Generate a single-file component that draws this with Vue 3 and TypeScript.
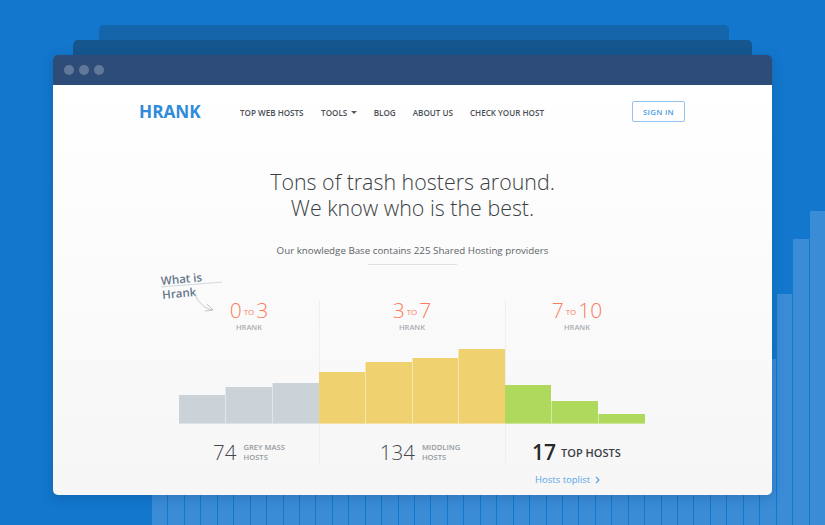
<script setup lang="ts">
const bgBars: number[] = [
  ...Array(37).fill(0).map((_, i) => 150 + i),
  166, 231, 286, 314,
]

interface Col {
  cls: string
  from: string
  to: string
  bars: number[]
}
const cols: Col[] = [
  { cls: 'grey', from: '0', to: '3', bars: [29, 37, 41] },
  { cls: 'yellow', from: '3', to: '7', bars: [52, 62, 66, 75] },
  { cls: 'green', from: '7', to: '10', bars: [39, 23, 10] },
]
</script>

<template>
  <div class="page">
    <div class="bg-bars">
      <i v-for="(h, i) in bgBars" :key="i" class="bg-bar" :style="{ height: h + 'px' }"></i>
    </div>
    <div class="stack">
      <div class="tab tab-back"></div>
      <div class="tab tab-mid"></div>
      <div class="window">
        <div class="titlebar">
          <span class="dot"></span><span class="dot"></span><span class="dot"></span>
        </div>
        <div class="content">
          <header class="nav">
            <div class="logo">HRANK</div>
            <nav class="links">
              <a>TOP WEB HOSTS</a>
              <a class="tools">TOOLS <span class="caret"></span></a>
              <a>BLOG</a>
              <a>ABOUT US</a>
              <a>CHECK YOUR HOST</a>
            </nav>
            <button class="signin">SIGN IN</button>
          </header>

          <h1 class="title">Tons of trash hosters around.<br />We know who is the best.</h1>
          <p class="sub">Our knowledge Base contains 225 Shared Hosting providers</p>
          <div class="rule"></div>

          <div class="chart-wrap">
            <div class="note">
              <div class="note-text">What is<br />Hrank</div>
              <svg class="note-svg" width="70" height="45" viewBox="0 0 70 45" fill="none">
                <path d="M1 17 L62 12" stroke="#c9ced3" stroke-width="0.8" />
                <path d="M35 25 C39 33 45 39 53 40" stroke="#b4bac0" stroke-width="0.8" />
                <path d="M47 34 L53 40 L45 41" stroke="#b4bac0" stroke-width="0.8" />
              </svg>
            </div>

            <div class="chart">
              <section v-for="(c, ci) in cols" :key="c.cls" class="col" :class="c.cls">
                <div class="head">
                  <div class="range">
                    {{ c.from }}<span class="to">TO</span>{{ c.to }}
                  </div>
                  <div class="hrank">HRANK</div>
                </div>
                <div class="bars">
                  <div
                    v-for="(b, bi) in c.bars"
                    :key="bi"
                    class="bar"
                    :style="{ height: b + 'px' }"
                  ></div>
                </div>
                <div v-if="ci === 0" class="foot">
                  <span class="num">74</span>
                  <span class="lab">GREY MASS<br />HOSTS</span>
                </div>
                <div v-else-if="ci === 1" class="foot">
                  <span class="num">134</span>
                  <span class="lab">MIDDLING<br />HOSTS</span>
                </div>
                <div v-else class="foot foot-top">
                  <div class="top-row">
                    <span class="num strong">17</span>
                    <span class="top-lab">TOP HOSTS</span>
                  </div>
                  <a class="toplist">Hosts toplist
                    <svg width="5" height="8" viewBox="0 0 5 8" fill="none">
                      <path d="M1 .8 4 4 1 7.2" stroke="#4f9de0" stroke-width="1.1" />
                    </svg>
                  </a>
                </div>
              </section>
            </div>
          </div>
        </div>
      </div>
    </div>
  </div>
</template>

<style>
html, body { margin: 0; padding: 0; }
</style>

<style scoped>
.page {
  position: relative;
  width: 825px;
  height: 525px;
  overflow: hidden;
  background: #1277cd;
  font-family: "Open Sans", "Liberation Sans", sans-serif;
}
.bg-bars {
  position: absolute;
  left: 152px;
  right: 0;
  bottom: 0;
  display: flex;
  align-items: flex-end;
  gap: 1px;
}
.bg-bar {
  flex: 1;
  background: #3a8cd7;
}
.stack {
  position: relative;
  padding-top: 25px;
}
.tab {
  height: 30px;
  border-radius: 5px 5px 0 0;
}
.tab-back {
  margin: 0 96px 0 99px;
  background: #1565ab;
}
.tab-mid {
  margin: -15px 73px 0 73px;
  background: #15568f;
}
.window {
  margin: -15px 53px 0 53px;
  height: 440px;
  border-radius: 5px;
  overflow: hidden;
  box-shadow: 0 3px 12px rgba(10, 50, 100, 0.25);
  display: flex;
  flex-direction: column;
}
.titlebar {
  height: 30px;
  background: #2e4c78;
  display: flex;
  align-items: center;
  gap: 5px;
  padding-left: 11px;
}
.dot {
  width: 10px;
  height: 10px;
  border-radius: 50%;
  background: #62789b;
}
.content {
  flex: 1;
  background: linear-gradient(#ffffff, #f6f6f6);
  display: flex;
  flex-direction: column;
  align-items: center;
}
.nav {
  align-self: stretch;
  display: flex;
  align-items: center;
  height: 55px;
  padding-left: 87px;
  box-sizing: border-box;
}
.logo {
  width: 100px;
  margin-left: -1px;
  margin-right: 1px;
  margin-top: -3px;
  font-size: 17.2px;
  font-weight: 700;
  color: #2f8bdc;
}
.links {
  display: flex;
  gap: 17px;
  margin-top: -1px;
  font-size: 8.1px;
  font-weight: 600;
  color: #4a4f55;
}
.tools {
  display: inline-flex;
  align-items: center;
  gap: 2.5px;
  margin-left: 0.5px;
}
.caret {
  width: 0;
  height: 0;
  margin-left: 1px;
  border: 3px solid transparent;
  border-top-color: #555a60;
  border-bottom: 0;
}
.signin {
  margin-left: 88px;
  margin-top: -2px;
  width: 53px;
  height: 21px;
  padding: 0;
  box-sizing: border-box;
  background: #fff;
  border: 1px solid #92c4ef;
  border-radius: 2px;
  font-family: inherit;
  font-size: 7.8px;
  font-weight: 600;
  color: #4a9be0;
  letter-spacing: 0.3px;
}
.title {
  margin: 29px 0 0;
  font-size: 21.4px;
  line-height: 26px;
  font-weight: 300;
  color: #3b3f44;
  text-align: center;
}
.sub {
  margin: 23px 0 0;
  font-size: 9.75px;
  line-height: 14px;
  color: #5e6368;
}
.rule {
  width: 89px;
  height: 1px;
  margin-top: 6px;
  background: #dfe1e3;
}
.chart-wrap {
  position: relative;
  align-self: stretch;
  margin-top: 35px;
  padding-left: 126px;
}
.note {
  position: absolute;
  left: 107px;
  top: -30px;
  width: 70px;
  height: 45px;
}
.note-text {
  transform: rotate(-5deg);
  transform-origin: 0 0;
  padding-top: 4px;
  font-size: 11.5px;
  line-height: 14px;
  font-weight: 600;
  color: #66788a;
}
.note-svg {
  position: absolute;
  left: 0;
  top: 0;
}
.chart {
  display: flex;
  width: 466px;
}
.col {
  position: relative;
  display: flex;
  flex-direction: column;
}
.col.grey { width: 140px; }
.col.yellow { width: 186px; }
.col.green { width: 140px; }
.col.yellow::after,
.col.green::after {
  content: "";
  position: absolute;
  left: 0;
  top: 0;
  width: 1px;
  height: 165px;
  background: #efefef;
}
.head {
  height: 49px;
  text-align: center;
}
.green .head { padding-left: 4px; }
.range {
  font-size: 21px;
  line-height: 20px;
  font-weight: 300;
  color: #fa7c5e;
}
.to {
  font-size: 8px;
  font-weight: 400;
  margin: 0 2px;
  vertical-align: 3px;
}
.hrank {
  font-size: 7.5px;
  line-height: 11px;
  font-weight: 600;
  color: #a9adb1;
}
.bars {
  position: relative;
  z-index: 1;
  height: 75px;
  display: flex;
  align-items: flex-end;
}
.bar {
  flex: 1;
  box-sizing: border-box;
  border-bottom: 1px solid rgba(255, 255, 255, 0.35);
}
.bar + .bar { border-left: 1px solid rgba(255, 255, 255, 0.45); }
.grey .bar { background: #cbd3d9; }
.yellow .bar { background: #efd26f; }
.green .bar { background: #afd95c; }
.foot {
  display: flex;
  align-items: center;
  justify-content: center;
  gap: 7px;
  height: 56px;
  box-sizing: border-box;
}
.yellow .foot { padding-left: 16px; }
.num {
  font-size: 20.5px;
  font-weight: 300;
  color: #45494e;
}
.lab {
  font-size: 7.6px;
  line-height: 10px;
  font-weight: 600;
  color: #94999e;
}
.foot-top {
  display: block;
  padding-left: 27px;
  padding-top: 14px;
}
.top-row {
  display: flex;
  align-items: center;
  gap: 5px;
  height: 28px;
}
.strong {
  font-size: 21px;
  font-weight: 600;
  color: #26292c;
}
.top-lab {
  font-size: 11px;
  font-weight: 600;
  color: #3a3e42;
}
.toplist {
  display: flex;
  align-items: center;
  gap: 5px;
  margin: 7px 0 0 3px;
  font-size: 9.5px;
  line-height: 14px;
  color: #5aa5e6;
}
</style>
